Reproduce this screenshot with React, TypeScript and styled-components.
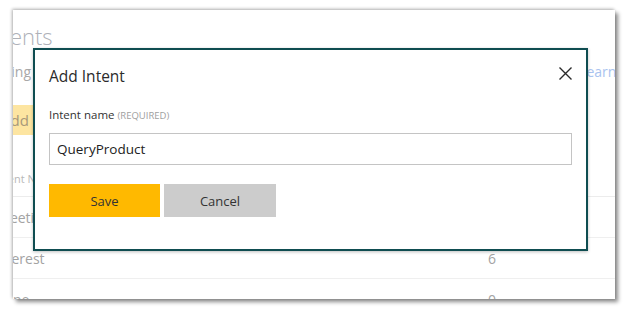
import { Fragment } from "react";
import styled, { createGlobalStyle } from "styled-components";

const GlobalStyle = createGlobalStyle`
  html, body {
    margin: 0;
    padding: 0;
    background: #ffffff;
  }
  body {
    font-family: "Open Sans", "Noto Sans", sans-serif;
  }
  * {
    box-sizing: border-box;
  }
`;

const S = {
  frame: styled.div`
    width: 628px;
    height: 309px;
    padding: 10px 0 0 13px;
    background: #ffffff;
  `,
  panel: styled.div`
    position: relative;
    width: 602px;
    height: 289px;
    background: #ffffff;
    overflow: hidden;
    box-shadow: 3px 3px 4px rgba(0, 0, 0, 0.45),
      -1px -1px 3px rgba(0, 0, 0, 0.3);
  `,
  page: styled.div`
    display: flex;
    flex-direction: column;
    width: 677px;
    margin-left: -35px;
    padding-top: 10px;
  `,
  title: styled.div`
    padding-left: 6px;
    font-size: 22px;
    font-weight: 300;
    line-height: 32px;
    color: #aeb1b8;
  `,
  descRow: styled.div`
    display: flex;
    justify-content: space-between;
    margin-top: 10px;
    font-size: 14px;
    line-height: 20px;
    color: #a8a8a8;
  `,
  learnLink: styled.span`
    color: #a9c3ef;
    white-space: nowrap;
  `,
  addButton: styled.div`
    display: flex;
    align-items: center;
    align-self: flex-start;
    height: 30px;
    margin-top: 23px;
    padding: 0 20px 0 23px;
    background: #fde5a1;
    color: #a8997a;
    font-size: 15px;
  `,
  table: styled.div`
    display: grid;
    grid-template-columns: 494px 1fr;
    margin-top: 36px;
  `,
  headCell: styled.div`
    padding: 0 0 9px 16px;
    font-size: 11px;
    line-height: 16px;
    color: #b8b8b8;
    border-bottom: 1px solid #ececec;
  `,
  cell: styled.div`
    display: flex;
    align-items: center;
    height: 41px;
    padding-left: 16px;
    font-size: 14px;
    color: #a3a3a3;
    border-bottom: 1px solid #efefef;
  `,
  dialog: styled.div`
    position: absolute;
    left: 20px;
    top: 38px;
    width: 555px;
    height: 203px;
    display: flex;
    flex-direction: column;
    padding: 14px 14px 0;
    background: #ffffff;
    border: 2px solid #0f4d51;
    box-shadow: 0 1px 3px rgba(0, 0, 0, 0.25);
  `,
  header: styled.div`
    display: flex;
    justify-content: space-between;
    align-items: flex-start;
    height: 24px;
  `,
  heading: styled.div`
    font-size: 15.5px;
    line-height: 24px;
    color: #2b2b2b;
  `,
  close: styled.button`
    display: flex;
    margin: 3px 0 0;
    padding: 0;
    border: none;
    background: none;
    cursor: pointer;
  `,
  label: styled.div`
    margin-top: 19px;
    font-size: 11.5px;
    line-height: 16px;
    color: #333333;
  `,
  required: styled.span`
    font-size: 9.5px;
    color: #a0a0a0;
    margin-left: 3px;
  `,
  input: styled.input`
    height: 32px;
    margin-top: 9px;
    padding: 0 7px;
    border: 1px solid #c4c4c4;
    font-family: "Open Sans", "Noto Sans", sans-serif;
    font-size: 13.5px;
    color: #222222;
    outline: none;
  `,
  actions: styled.div`
    display: flex;
    gap: 4px;
    margin-top: 19px;
  `,
  button: styled.button<{ $primary?: boolean }>`
    width: ${(p) => (p.$primary ? "111px" : "112px")};
    height: 33px;
    border: none;
    background: ${(p) => (p.$primary ? "#ffb900" : "#cccccc")};
    color: #333333;
    font-family: "Open Sans", "Noto Sans", sans-serif;
    font-size: 13px;
    cursor: pointer;
  `,
};

const rows = [
  { name: "Greeting", count: "4" },
  { name: "Interest", count: "6" },
  { name: "None", count: "0" },
];

export default function App() {
  return (
    <>
      <GlobalStyle />
      <S.frame>
        <S.panel>
          <S.page>
            <S.title>Intents</S.title>
            <S.descRow>
              <span>Training your app starts with intents.</span>
              <S.learnLink>Learn more</S.learnLink>
            </S.descRow>
            <S.addButton>Add Intent</S.addButton>
            <S.table>
              <S.headCell>Intent Name</S.headCell>
              <S.headCell>Utterances</S.headCell>
              {rows.map((r) => (
                <Fragment key={r.name}>
                  <S.cell>{r.name}</S.cell>
                  <S.cell>{r.count}</S.cell>
                </Fragment>
              ))}
            </S.table>
          </S.page>
          <S.dialog>
            <S.header>
              <S.heading>Add Intent</S.heading>
              <S.close aria-label="Close">
                <svg width="13" height="13" viewBox="0 0 13 13">
                  <path
                    d="M0.5 0.5 L12.5 12.5 M12.5 0.5 L0.5 12.5"
                    stroke="#2b2b2b"
                    strokeWidth="1.4"
                    fill="none"
                  />
                </svg>
              </S.close>
            </S.header>
            <S.label>
              Intent name<S.required>(REQUIRED)</S.required>
            </S.label>
            <S.input defaultValue="QueryProduct" />
            <S.actions>
              <S.button $primary>Save</S.button>
              <S.button>Cancel</S.button>
            </S.actions>
          </S.dialog>
        </S.panel>
      </S.frame>
    </>
  );
}
